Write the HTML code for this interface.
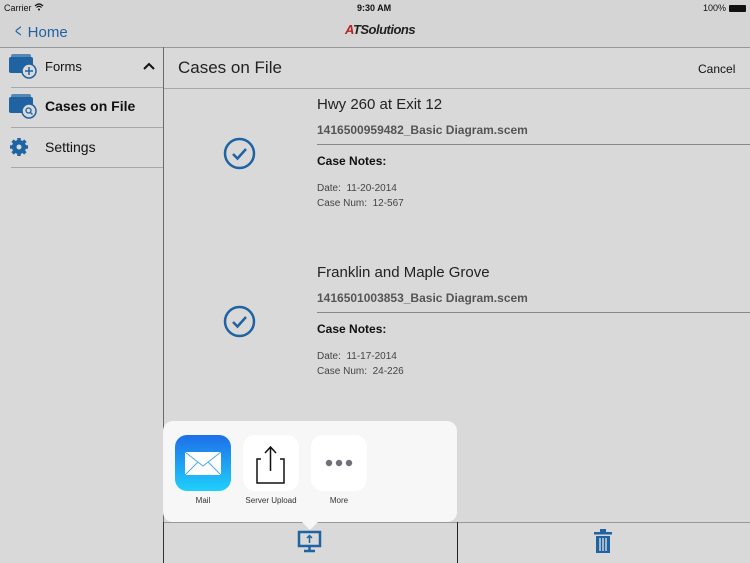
<!DOCTYPE html>
<html><head><meta charset="utf-8"><style>
*{margin:0;padding:0;box-sizing:border-box}
body{width:750px;height:563px;overflow:hidden;background:#d9d9d9;font-family:"Liberation Sans",sans-serif;position:relative;color:#111}
.a{position:absolute;white-space:nowrap}
.hl{position:absolute;height:1px;background:#a8a8a8}
.vl{position:absolute;width:1px;background:#6a6a6a}
.blue{color:#1f63a3}
</style></head><body>
<div class="a" style="left:0;top:0;width:750px;height:47px;background:#d5d5d5"></div>
<div class="a" style="left:4px;top:3px;font-size:9px">Carrier <svg width="10" height="8" viewBox="0 0 10 8"><path d="M1 3Q5 -1 9 3M2.5 4.5Q5 2 7.5 4.5" stroke="#111" fill="none" stroke-width="1.2"/><circle cx="5" cy="6.5" r="1" fill="#111"/></svg></div>
<div class="a" style="left:357px;top:3px;font-size:9px;font-weight:bold">9:30 AM</div>
<div class="a" style="left:703px;top:3px;font-size:9px">100% <span style="display:inline-block;width:17px;height:7px;background:#111;vertical-align:-1px;border-radius:1px"></span></div>
<div class="a blue" style="left:13px;top:21px;font-size:15px"><span style="display:inline-block;transform:scaleX(.6);font-size:18px">&lt;</span> Home</div>
<div class="a" style="left:345px;top:22px;font-size:13px;font-weight:bold;font-style:italic;color:#222;letter-spacing:-0.5px"><span style="color:#b22">A</span>TSolutions</div>
<div class="hl" style="left:0;top:47px;width:750px;background:#999"></div>
<div class="vl" style="left:163px;top:47px;height:475px"></div>
<div class="vl" style="left:163px;top:522px;height:41px;background:#333"></div>
<!-- sidebar -->
<svg class="a" style="left:9px;top:54px" width="30" height="26" viewBox="0 0 30 26"><rect x="2" y="0" width="20" height="5" rx="2" fill="#1f63a3" opacity=".7"/><rect x="0" y="3" width="24" height="16" rx="2" fill="#1f63a3"/><circle cx="20" cy="17" r="7" fill="#d9d9d9" stroke="#1f63a3" stroke-width="1.5"/><path d="M20 13v8M16 17h8" stroke="#1f63a3" stroke-width="1.5"/></svg>
<div class="a" style="left:45px;top:59px;font-size:13px">Forms</div>
<svg class="a" style="left:143px;top:62px" width="12" height="8"><path d="M1 7L6 2L11 7" stroke="#111" stroke-width="2" fill="none"/></svg>
<div class="hl" style="left:11px;top:87px;width:152px"></div>
<svg class="a" style="left:9px;top:94px" width="30" height="26" viewBox="0 0 30 26"><rect x="2" y="0" width="20" height="5" rx="2" fill="#1f63a3" opacity=".7"/><rect x="0" y="3" width="24" height="16" rx="2" fill="#1f63a3"/><circle cx="20" cy="17" r="7" fill="#d9d9d9" stroke="#1f63a3" stroke-width="1.5"/><circle cx="19.5" cy="16.5" r="2.5" fill="none" stroke="#1f63a3" stroke-width="1.3"/><path d="M21.5 18.5l2 2" stroke="#1f63a3" stroke-width="1.3"/></svg>
<div class="a" style="left:45px;top:98px;font-size:14px;font-weight:bold">Cases on File</div>
<div class="hl" style="left:11px;top:127px;width:152px"></div>
<svg class="a" style="left:9px;top:137px" width="20" height="20" viewBox="0 0 20 20"><g fill="#1f63a3"><circle cx="10" cy="10" r="7"/><g stroke="#1f63a3" stroke-width="3.5"><path d="M10 1v18M1 10h18M3.6 3.6l12.8 12.8M16.4 3.6L3.6 16.4"/></g></g><circle cx="10" cy="10" r="2.5" fill="#d9d9d9"/></svg>
<div class="a" style="left:45px;top:139px;font-size:14px">Settings</div>
<div class="hl" style="left:11px;top:167px;width:152px"></div>
<!-- main header -->
<div class="a" style="left:178px;top:58px;font-size:17px;color:#222">Cases on File</div>
<div class="a" style="left:698px;top:62px;font-size:12px">Cancel</div>
<div class="hl" style="left:164px;top:88px;width:586px"></div>
<!-- item 1 -->
<svg class="a" style="left:223px;top:137px" width="33" height="33"><circle cx="16.5" cy="16.5" r="14.5" fill="none" stroke="#1f63a3" stroke-width="2.5"/><path d="M10 17l4.5 4.5L23 12" stroke="#1f63a3" stroke-width="2.5" fill="none"/></svg>
<div class="a" style="left:317px;top:96px;font-size:15px;color:#222">Hwy 260 at Exit 12</div>
<div class="a" style="left:317px;top:123px;font-size:12px;font-weight:bold;color:#555">1416500959482_Basic Diagram.scem</div>
<div class="hl" style="left:317px;top:144px;width:433px;background:#888"></div>
<div class="a" style="left:317px;top:154px;font-size:12px;font-weight:bold">Case Notes:</div>
<div class="a" style="left:317px;top:183px;font-size:10px;color:#444">Date:&nbsp; 11-20-2014</div>
<div class="a" style="left:317px;top:198px;font-size:10px;color:#444">Case Num:&nbsp; 12-567</div>
<!-- item 2 -->
<svg class="a" style="left:223px;top:305px" width="33" height="33"><circle cx="16.5" cy="16.5" r="14.5" fill="none" stroke="#1f63a3" stroke-width="2.5"/><path d="M10 17l4.5 4.5L23 12" stroke="#1f63a3" stroke-width="2.5" fill="none"/></svg>
<div class="a" style="left:317px;top:264px;font-size:15px;color:#222">Franklin and Maple Grove</div>
<div class="a" style="left:317px;top:291px;font-size:12px;font-weight:bold;color:#555">1416501003853_Basic Diagram.scem</div>
<div class="hl" style="left:317px;top:312px;width:433px;background:#888"></div>
<div class="a" style="left:317px;top:322px;font-size:12px;font-weight:bold">Case Notes:</div>
<div class="a" style="left:317px;top:351px;font-size:10px;color:#444">Date:&nbsp; 11-17-2014</div>
<div class="a" style="left:317px;top:366px;font-size:10px;color:#444">Case Num:&nbsp; 24-226</div>
<!-- toolbar -->
<div class="hl" style="left:164px;top:522px;width:586px;background:#999"></div>
<div class="vl" style="left:457px;top:522px;height:41px;background:#222"></div>
<svg class="a" style="left:297px;top:530px" width="26" height="24" viewBox="0 0 26 24"><rect x="2" y="2" width="21" height="14" fill="none" stroke="#1f63a3" stroke-width="2.5"/><path d="M12.5 16v4M7 21h11" stroke="#1f63a3" stroke-width="2.5"/><path d="M12.5 13V6M10 8l2.5-2.5L15 8" stroke="#1f63a3" stroke-width="1.5" fill="none"/></svg>
<svg class="a" style="left:593px;top:529px" width="20" height="25" viewBox="0 0 20 25"><rect x="1" y="3" width="18" height="2.5" fill="#1f63a3"/><rect x="7" y="0" width="6" height="3" fill="#1f63a3"/><rect x="3" y="7" width="14" height="17" fill="#1f63a3"/><path d="M7 9v13M10 9v13M13 9v13" stroke="#d9d9d9" stroke-width="1.4"/></svg>
<!-- popover -->
<div class="a" style="left:163px;top:421px;width:294px;height:101px;background:#f7f7f7;border-radius:10px"></div>
<div class="a" style="left:301px;top:521px;width:0;height:0;border-left:9px solid transparent;border-right:9px solid transparent;border-top:9px solid #f7f7f7"></div>
<div class="a" style="left:175px;top:435px;width:56px;height:56px;border-radius:12px;background:linear-gradient(#1e6fe8,#1fd0fb)"></div>
<svg class="a" style="left:184px;top:451px" width="38" height="25"><rect x="1" y="1" width="36" height="23" fill="#fff" rx="1"/><path d="M1 1L19 15L37 1M1 24L14 11M37 24L24 11" stroke="#4aa8f3" stroke-width="1" fill="none"/></svg>
<div class="a" style="left:243px;top:435px;width:56px;height:56px;border-radius:12px;background:#fff"></div>
<svg class="a" style="left:255px;top:443px" width="32" height="42"><path d="M6 16H2V40H29V16H25M15.5 4V28M10 10L15.5 4L21 10" stroke="#111" stroke-width="1.5" fill="none"/></svg>
<div class="a" style="left:311px;top:435px;width:56px;height:56px;border-radius:12px;background:#fff"></div>
<svg class="a" style="left:324px;top:457px" width="30" height="12"><circle cx="5" cy="6" r="3.2" fill="#707078"/><circle cx="15" cy="6" r="3.2" fill="#707078"/><circle cx="25" cy="6" r="3.2" fill="#707078"/></svg>
<div class="a" style="left:175px;top:496px;width:56px;text-align:center;font-size:8px;color:#333">Mail</div>
<div class="a" style="left:236px;top:496px;width:70px;text-align:center;font-size:8px;color:#333">Server Upload</div>
<div class="a" style="left:311px;top:496px;width:56px;text-align:center;font-size:8px;color:#333">More</div>
</body></html>
